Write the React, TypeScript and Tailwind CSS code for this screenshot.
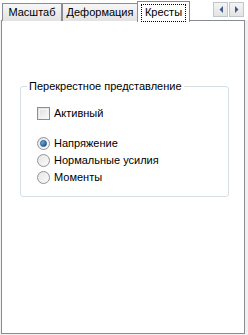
import React from "react";

const font = { fontFamily: '"Liberation Sans", Arial, sans-serif' };

type TabProps = { label: string; width: string };

const Tab: React.FC<TabProps> = ({ label, width }) => (
  <div
    className={`${width} h-[18px] mt-[3px] flex items-center justify-center border border-b-0 border-[#898c95] bg-gradient-to-b from-[#f7f7f7] to-[#e2e2e2] text-[11px] leading-none text-black`}
  >
    {label}
  </div>
);

const ScrollButton: React.FC<{ dir: "left" | "right" }> = ({ dir }) => (
  <div className="w-[15px] h-[15px] flex items-center justify-center border border-[#c2c5ca] bg-gradient-to-b from-[#f4f4f4] to-[#e4e4e4]">
    <svg width="4" height="7" viewBox="0 0 4 7">
      {dir === "left" ? (
        <polygon points="4,0 4,7 0.5,3.5" fill="#3c5d8c" />
      ) : (
        <polygon points="0,0 0,7 3.5,3.5" fill="#3c5d8c" />
      )}
    </svg>
  </div>
);

const Radio: React.FC<{ checked?: boolean; label: string }> = ({ checked, label }) => (
  <div className="flex items-center h-[13px] gap-[4px]">
    <div className="w-[13px] h-[13px] rounded-full border border-[#8f9296] bg-gradient-to-br from-[#e6e6e6] to-[#fafafa] flex items-center justify-center">
      {checked && (
        <div className="w-[7px] h-[7px] rounded-full bg-gradient-to-br from-[#7ec4ef] to-[#0d4f8a] border border-[#1c5180]" />
      )}
    </div>
    <span className="text-[11px] leading-none text-black">{label}</span>
  </div>
);

export default function App() {
  return (
    <div className="w-[248px] h-[335px] bg-[#f0f0f0] overflow-hidden" style={font}>
      <div className="flex h-[20px] pl-[2px] bg-white">
        <Tab label="Масштаб" width="w-[60px]" />
        <Tab label="Деформация" width="w-[76px]" />
        <div className="relative z-10 w-[53px] h-[21px] mt-[1px] -ml-[1px] flex items-center justify-center border border-b-0 border-[#898c95] bg-white text-[11px] leading-none text-black">
          <div className="absolute left-[3px] right-[3px] top-[2px] bottom-0 border border-dotted border-black" />
          <span>Кресты</span>
        </div>
        <div className="flex-1" />
        <div className="flex gap-[1px] mt-[2px] mr-[4px]">
          <ScrollButton dir="left" />
          <ScrollButton dir="right" />
        </div>
      </div>
      <div className="ml-[1px] w-[244px] h-[314px] border border-[#898c95] bg-white pt-[65px] pl-[18px]">
        <div className="relative w-[209px] h-[111px] border border-[#d5dfe5] rounded-[3px] pl-[16px] pt-[20px]">
          <span className="absolute left-[6px] -top-[7px] px-[2px] bg-white text-[11px] leading-[13px] text-black">
            Перекрестное представление
          </span>
          <div className="flex items-center h-[13px] gap-[4px]">
            <div className="w-[13px] h-[13px] border border-[#8e8f8f] bg-gradient-to-br from-[#dcdcdc] to-[#fbfbfb] p-[1px]">
              <div className="w-full h-full border border-[#f4f4f4]" />
            </div>
            <span className="text-[11px] leading-none text-black">Активный</span>
          </div>
          <div className="flex flex-col gap-[4px] mt-[17px]">
            <Radio checked label="Напряжение" />
            <Radio label="Нормальные усилия" />
            <Radio label="Моменты" />
          </div>
        </div>
      </div>
    </div>
  );
}
